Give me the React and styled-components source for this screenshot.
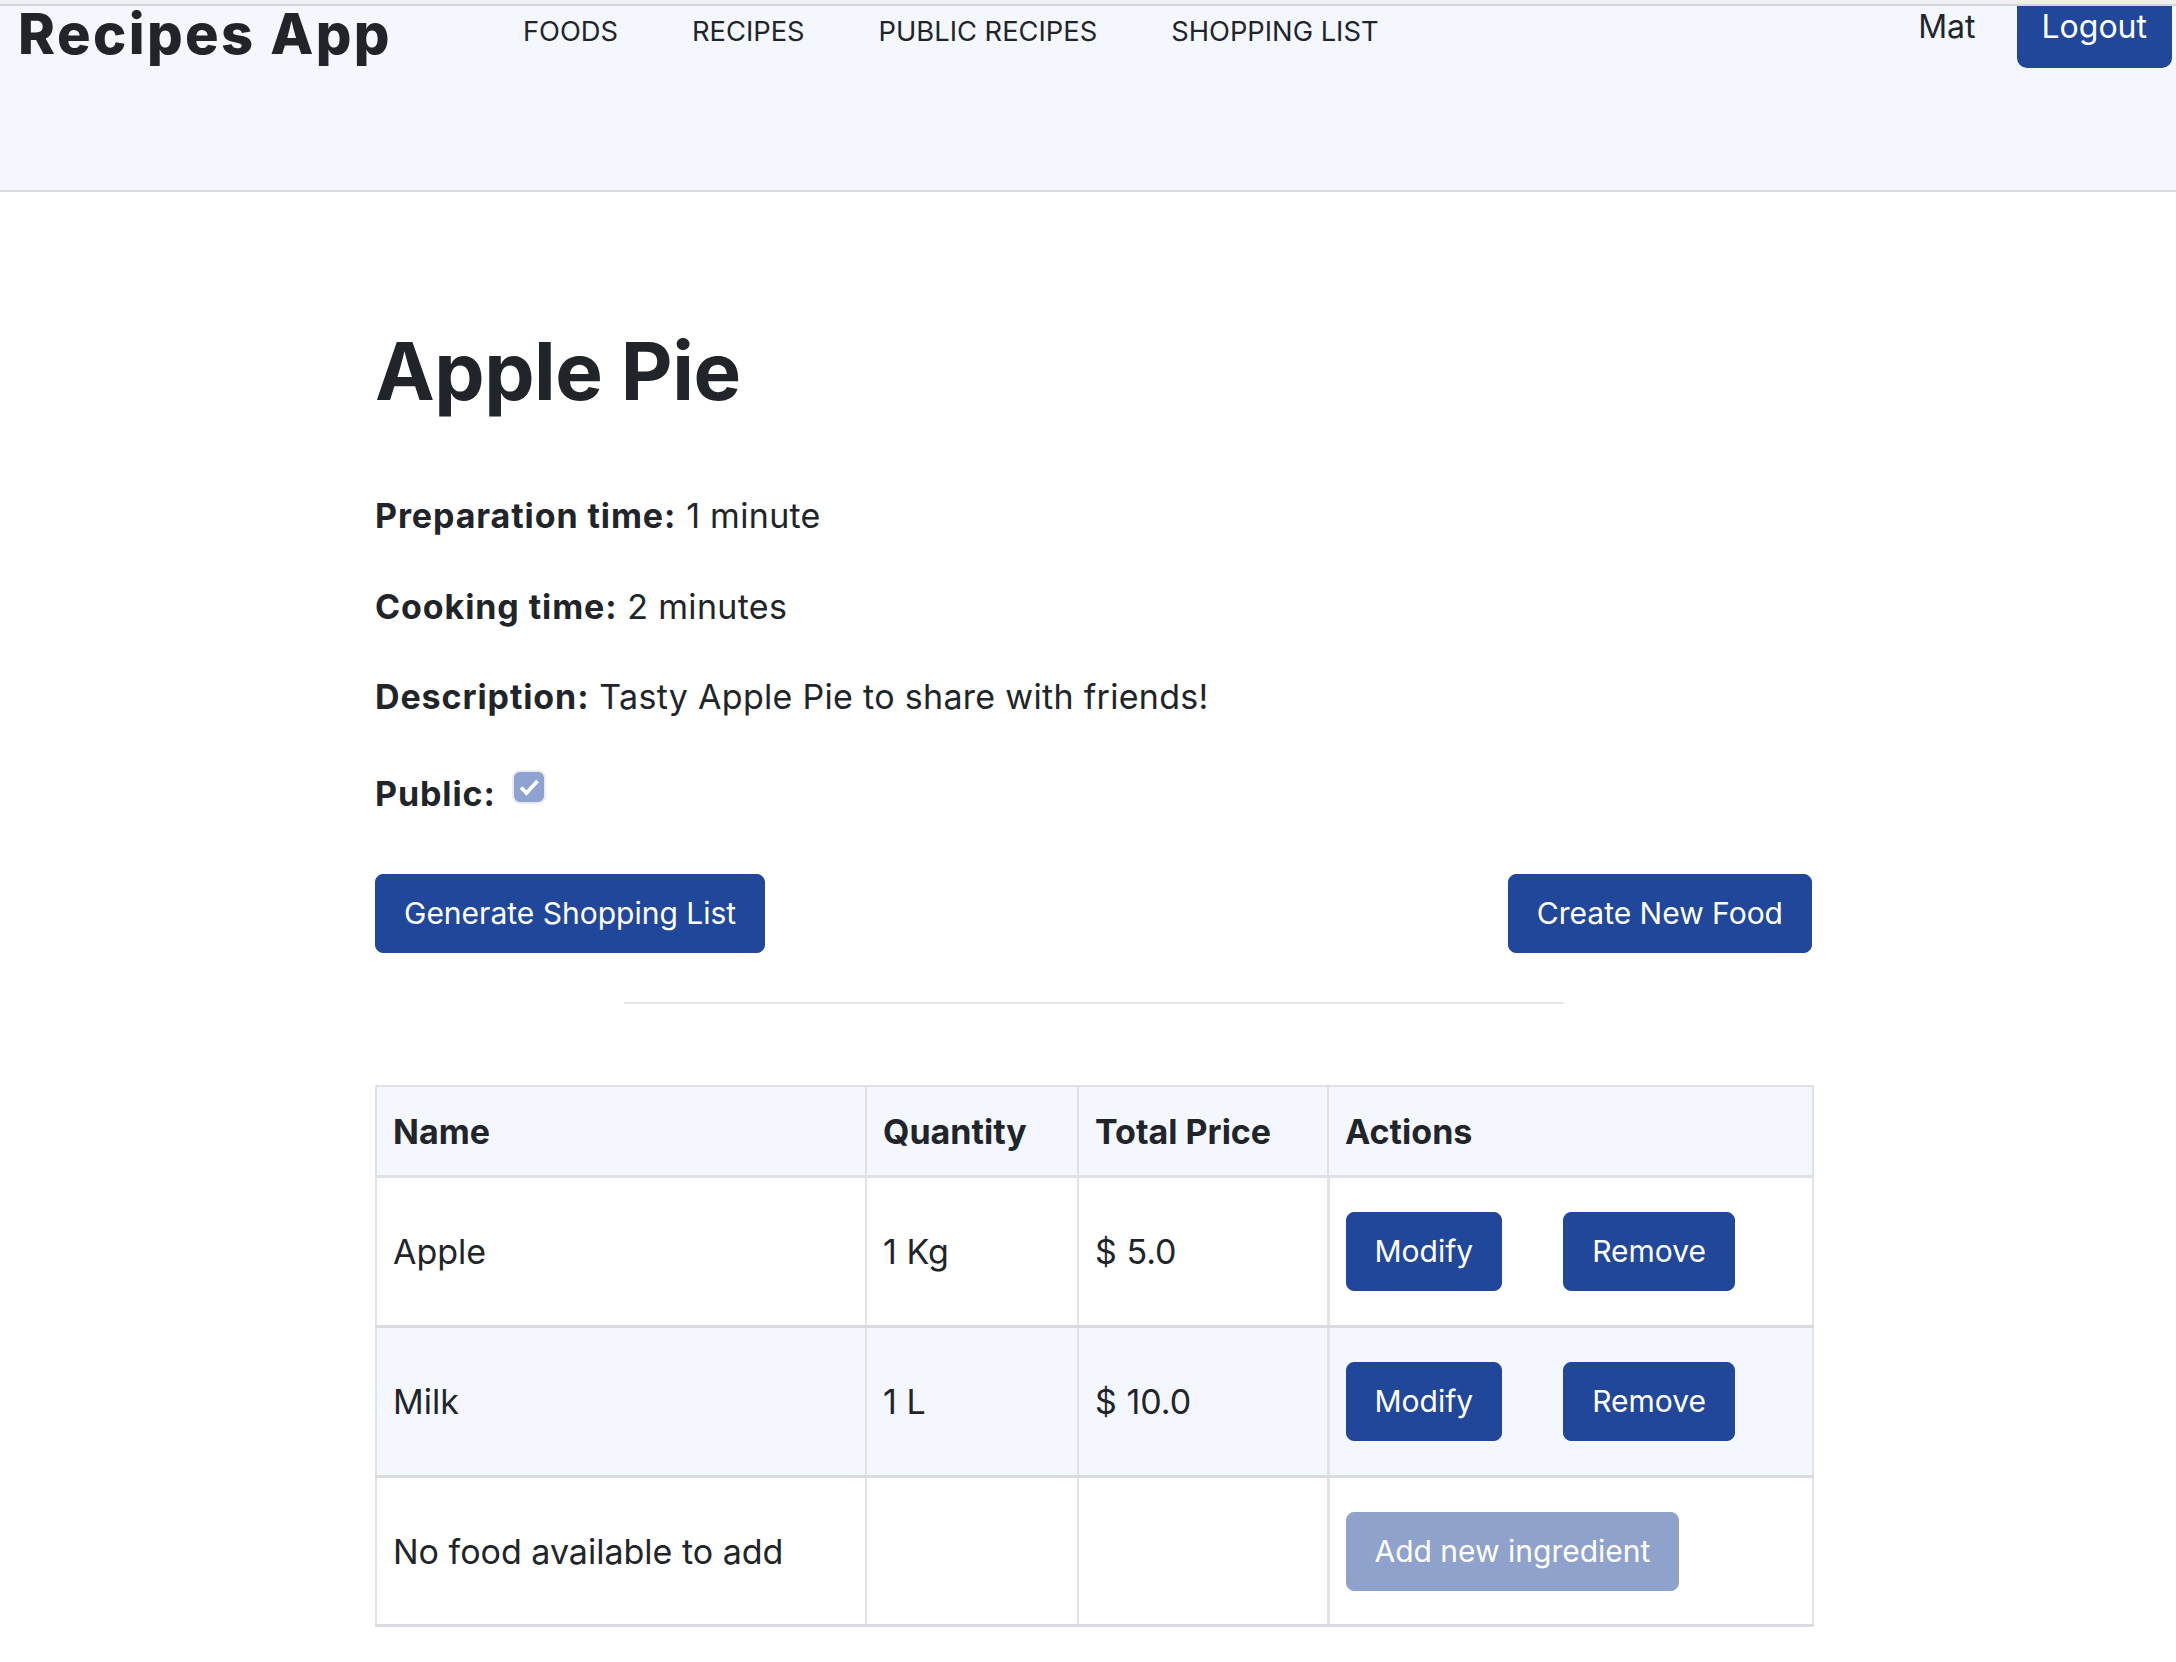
import React from "react";
import styled, { createGlobalStyle } from "styled-components";

const GlobalStyle = createGlobalStyle`
  body {
    margin: 0;
    border-top: 4px solid #efefef;
    background: #ffffff;
    color: #212529;
    font-family: Inter, "Noto Sans", "Liberation Sans", sans-serif;
  }
`;

const Header = styled.header`
  display: flex;
  align-items: flex-start;
  height: 184px;
  background: #f4f7fe;
  border-top: 2px solid #d3d8e0;
  border-bottom: 2px solid #d9dce1;
`;

const Brand = styled.h1`
  margin: 0 0 0 18px;
  font-size: 56px;
  line-height: 1;
  font-weight: 800;
  letter-spacing: 2.4px;
  white-space: nowrap;
`;

const Nav = styled.nav`
  display: flex;
  margin-left: 94px;
  padding-top: 12px;
`;

const NavLink = styled.a`
  padding: 0 37px;
  font-size: 27.3px;
  line-height: 1;
  color: #212529;
  text-decoration: none;
  white-space: nowrap;
`;

const UserArea = styled.div`
  display: flex;
  align-items: flex-start;
  gap: 41px;
  margin: 0 4px 0 auto;
`;

const UserName = styled.span`
  margin-top: 5px;
  font-size: 32px;
  line-height: 1;
`;

const LogoutButton = styled.button`
  padding: 0 25px 20px;
  border: none;
  border-radius: 0 0 10px 10px;
  background: #21479b;
  color: #ffffff;
  font-family: inherit;
  font-size: 32px;
  line-height: 42px;
`;

const Main = styled.main`
  width: 1437px;
  margin-left: 375px;
  padding: 131px 0 40px;
`;

const Title = styled.h2`
  margin: 0 0 72px;
  font-size: 80px;
  line-height: 96px;
  font-weight: 700;
  letter-spacing: -0.5px;
`;

const Detail = styled.p`
  margin: ${(p) => (p.$last ? "47px 0 0" : "0 0 41px")};
  font-size: 34px;
  line-height: 49.5px;
  letter-spacing: 0.3px;
`;

const Label = styled.strong`
  font-weight: 700;
  letter-spacing: 0.9px;
`;

const CheckBox = styled.span`
  display: inline-block;
  width: 30px;
  height: 30px;
  margin: 0 0 2px 16px;
  border: 2px solid #e9ecf4;
  border-radius: 8px;
  background: #8fa3d0;
  vertical-align: baseline;

  svg {
    display: block;
  }
`;

const ButtonRow = styled.div`
  display: flex;
  justify-content: space-between;
  margin-top: 56px;
`;

const Button = styled.button`
  padding: 16px 28px;
  border: 1px solid #21479b;
  border-radius: 8px;
  background: #21479b;
  color: #ffffff;
  font-family: inherit;
  font-size: 30px;
  line-height: 45px;
  opacity: ${(p) => (p.disabled ? 0.5 : 1)};
  margin-right: ${(p) => p.$gap || 0}px;
`;

const Divider = styled.hr`
  width: 940px;
  margin: 49px auto 81px;
  border: 0;
  border-top: 2px solid #e6e7e9;
`;

const Table = styled.table`
  width: 100%;
  border-collapse: collapse;
  table-layout: fixed;
`;

const Col = styled.col`
  width: ${(p) => p.$w}px;
`;

const Th = styled.th`
  height: 88px;
  padding: 0 16px;
  background: #f4f7fe;
  border: 2px solid #dfe1e6;
  border-bottom-width: 3px;
  text-align: left;
  font-size: 34px;
  font-weight: 700;
`;

const Row = styled.tr`
  background: ${(p) => (p.$striped ? "#f4f7fe" : "#ffffff")};
`;

const Td = styled.td`
  height: ${(p) => p.$h || 147}px;
  padding: 0 16px;
  border: 2px solid #e1e3e7;
  border-bottom: 3px solid #d9dbe0;
  font-size: 34px;
  vertical-align: middle;
`;

const ActionCell = styled(Td)`
  padding: 0 16px;
  border-left-width: 3px;
`;

const Check = () => (
  <svg width="30" height="30" viewBox="0 0 30 30">
    <path
      d="M7 15.5l5.5 5.5L23.5 9"
      fill="none"
      stroke="#ffffff"
      strokeWidth="3.8"
    />
  </svg>
);

const ingredients = [
  { name: "Apple", quantity: "1 Kg", price: "$ 5.0" },
  { name: "Milk", quantity: "1 L", price: "$ 10.0" },
];

const App = () => {
  return (
    <>
      <GlobalStyle />
      <Header>
        <Brand>Recipes App</Brand>
        <Nav>
          <NavLink href="#">FOODS</NavLink>
          <NavLink href="#">RECIPES</NavLink>
          <NavLink href="#">PUBLIC RECIPES</NavLink>
          <NavLink href="#">SHOPPING LIST</NavLink>
        </Nav>
        <UserArea>
          <UserName>Mat</UserName>
          <LogoutButton>Logout</LogoutButton>
        </UserArea>
      </Header>
      <Main>
        <Title>Apple Pie</Title>
        <Detail>
          <Label>Preparation time:</Label> 1 minute
        </Detail>
        <Detail>
          <Label>Cooking time:</Label> 2 minutes
        </Detail>
        <Detail>
          <Label>Description:</Label> Tasty Apple Pie to share with friends!
        </Detail>
        <Detail $last>
          <Label>Public:</Label>
          <CheckBox>
            <Check />
          </CheckBox>
        </Detail>
        <ButtonRow>
          <Button>Generate Shopping List</Button>
          <Button>Create New Food</Button>
        </ButtonRow>
        <Divider />
        <Table>
          <colgroup>
            <Col $w={490} />
            <Col $w={212} />
            <Col $w={250} />
            <Col $w={485} />
          </colgroup>
          <thead>
            <tr>
              <Th>Name</Th>
              <Th>Quantity</Th>
              <Th>Total Price</Th>
              <Th>Actions</Th>
            </tr>
          </thead>
          <tbody>
            {ingredients.map((item, i) => (
              <Row key={item.name} $striped={i % 2 === 1}>
                <Td>{item.name}</Td>
                <Td>{item.quantity}</Td>
                <Td>{item.price}</Td>
                <ActionCell>
                  <Button $gap={61}>Modify</Button>
                  <Button>Remove</Button>
                </ActionCell>
              </Row>
            ))}
            <Row>
              <Td $h={146}>No food available to add</Td>
              <Td $h={146} />
              <Td $h={146} />
              <ActionCell $h={146}>
                <Button disabled>Add new ingredient</Button>
              </ActionCell>
            </Row>
          </tbody>
        </Table>
      </Main>
    </>
  );
};

export default App;
